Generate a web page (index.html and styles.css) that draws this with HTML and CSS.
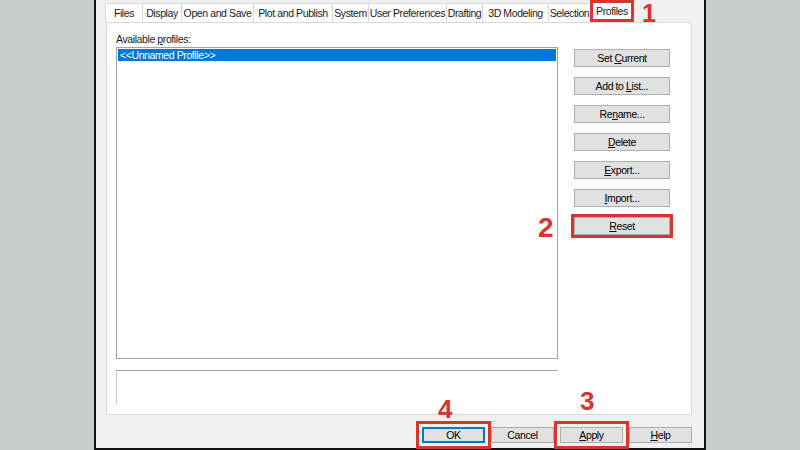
FILE: index.html
```html
<!doctype html>
<html>
  <head>
    <meta charset="utf-8">
    <title>Options - Profiles</title>
    <link rel="stylesheet" href="styles.css">
  </head>
  <body>
    <div class="dialog">
      <div class="tabs">
        <span class="tab t-files">Files</span>
        <span class="tab t-display">Display</span>
        <span class="tab t-open">Open and Save</span>
        <span class="tab t-plot">Plot and Publish</span>
        <span class="tab t-system">System</span>
        <span class="tab t-user">User Preferences</span>
        <span class="tab t-drafting">Drafting</span>
        <span class="tab t-3d">3D Modeling</span>
        <span class="tab t-selection">Selection</span>
        <span class="tab t-profiles active mark-tab">Profiles<span class="num n1">1</span></span>
      </div>

      <div class="panel">
        <div class="main">
          <div class="label">Available <u>p</u>rofiles:</div>
          <div class="list">
            <div class="item selected">&lt;&lt;Unnamed Profile&gt;&gt;</div>
          </div>
          <div class="desc"></div>
        </div>

        <div class="side">
          <button class="btn">Set <u>C</u>urrent</button>
          <button class="btn">Add to <u>L</u>ist...</button>
          <button class="btn">Re<u>n</u>ame...</button>
          <button class="btn"><u>D</u>elete</button>
          <button class="btn"><u>E</u>xport...</button>
          <button class="btn"><u>I</u>mport...</button>
          <button class="btn mark-side"><u>R</u>eset<span class="num n2">2</span></button>
        </div>
      </div>

      <div class="footer">
        <button class="btn default mark-foot">OK<span class="num n4">4</span></button>
        <button class="btn">Cancel</button>
        <button class="btn mark-foot"><u>A</u>pply<span class="num n3">3</span></button>
        <button class="btn"><u>H</u>elp</button>
      </div>
    </div>
  </body>
</html>
```

FILE: styles.css
```css
html, body {
  margin: 0;
  padding: 0;
  width: 100%;
  height: 100%;
  background: #c7cccf;
  font-family: "Liberation Sans", Arial, sans-serif;
  font-size: 10.5px;
  letter-spacing: -0.4px;
  color: #000000;
  overflow: hidden;
}

u {
  text-decoration: underline;
  text-underline-offset: 1px;
}

.dialog {
  margin-left: 94px;
  width: 586px;
  height: 448px;
  padding: 0 12px 0 10px;
  background: #f0f0f0;
  border: 2px solid #111111;
  border-top: none;
  display: flex;
  flex-direction: column;
}

/* tab strip */
.tabs {
  display: flex;
  align-items: flex-end;
  height: 22px;
  margin-left: -1px;
}

.tab {
  box-sizing: border-box;
  height: 19px;
  line-height: 18px;
  text-align: center;
  background: #ffffff;
  color: #1a1a1a;
  border: 1px solid #d9d9d9;
  border-bottom: none;
  margin-right: -1px;
  white-space: nowrap;
  position: relative;
}

.t-files { width: 38px; }
.t-display { width: 40px; }
.t-open { width: 73px; }
.t-plot { width: 80px; }
.t-system { width: 37px; }
.t-user { width: 79px; }
.t-drafting { width: 37px; }
.t-3d { width: 67px; }
.t-selection { width: 43px; }
.t-profiles { width: 44px; }

.tab.active {
  height: 22px;
  line-height: 20px;
  z-index: 1;
}

/* red annotations */
.mark-tab {
  outline: 3px solid #d8352e;
  outline-offset: -3px;
}

.mark-side {
  outline: 3px solid #d8352e;
  outline-offset: 0;
}

.mark-foot {
  outline: 3px solid #d8352e;
  outline-offset: 3px;
}

.num {
  position: absolute;
  font-family: "Liberation Sans", sans-serif;
  font-weight: bold;
  font-size: 26px;
  letter-spacing: 0;
  line-height: 1;
  color: #d8352e;
}

.n1 {
  left: 51px;
  top: 0;
  font-size: 25px;
}

.n2 {
  font-size: 28px;
  left: -37px;
  top: -4px;
}

.n3 {
  left: 19px;
  top: -40px;
}

.n4 {
  left: 15px;
  top: -32px;
}

/* tab page */
.panel {
  height: 391px;
  background: #ffffff;
  border: 1px solid #d9d9d9;
  display: flex;
}

.main {
  width: 442px;
  margin-left: 9px;
  padding-top: 10px;
}

.label {
  height: 13px;
  line-height: 13px;
  margin-bottom: 1px;
  color: #1a1a1a;
}

.list {
  height: 308px;
  border: 1px solid #a3a3a3;
  padding: 1px;
}

.item {
  height: 12px;
  line-height: 12px;
  padding-left: 2px;
}

.item.selected {
  background: #0078d7;
  color: #ffffff;
}

.desc {
  margin-top: 11px;
  height: 34px;
  border-top: 1px solid #a0a0a0;
  border-left: 1px solid #c8c8c8;
}

.side {
  margin-left: 16px;
  padding-top: 26px;
  display: flex;
  flex-direction: column;
  gap: 10px;
}

.btn {
  position: relative;
  width: 96px;
  height: 18px;
  padding: 0;
  font-family: inherit;
  font-size: 10.5px;
  letter-spacing: -0.4px;
  color: #000000;
  background: #e1e1e1;
  border: 1px solid #adadad;
  border-radius: 0;
}

.btn.default {
  border-color: #0078d7;
  box-shadow: inset 0 0 0 1px #0078d7;
}

/* dialog buttons */
.footer {
  display: flex;
  justify-content: flex-end;
  gap: 6px;
  padding-top: 12px;
}

.footer .btn {
  width: 63px;
  height: 16px;
}
```
